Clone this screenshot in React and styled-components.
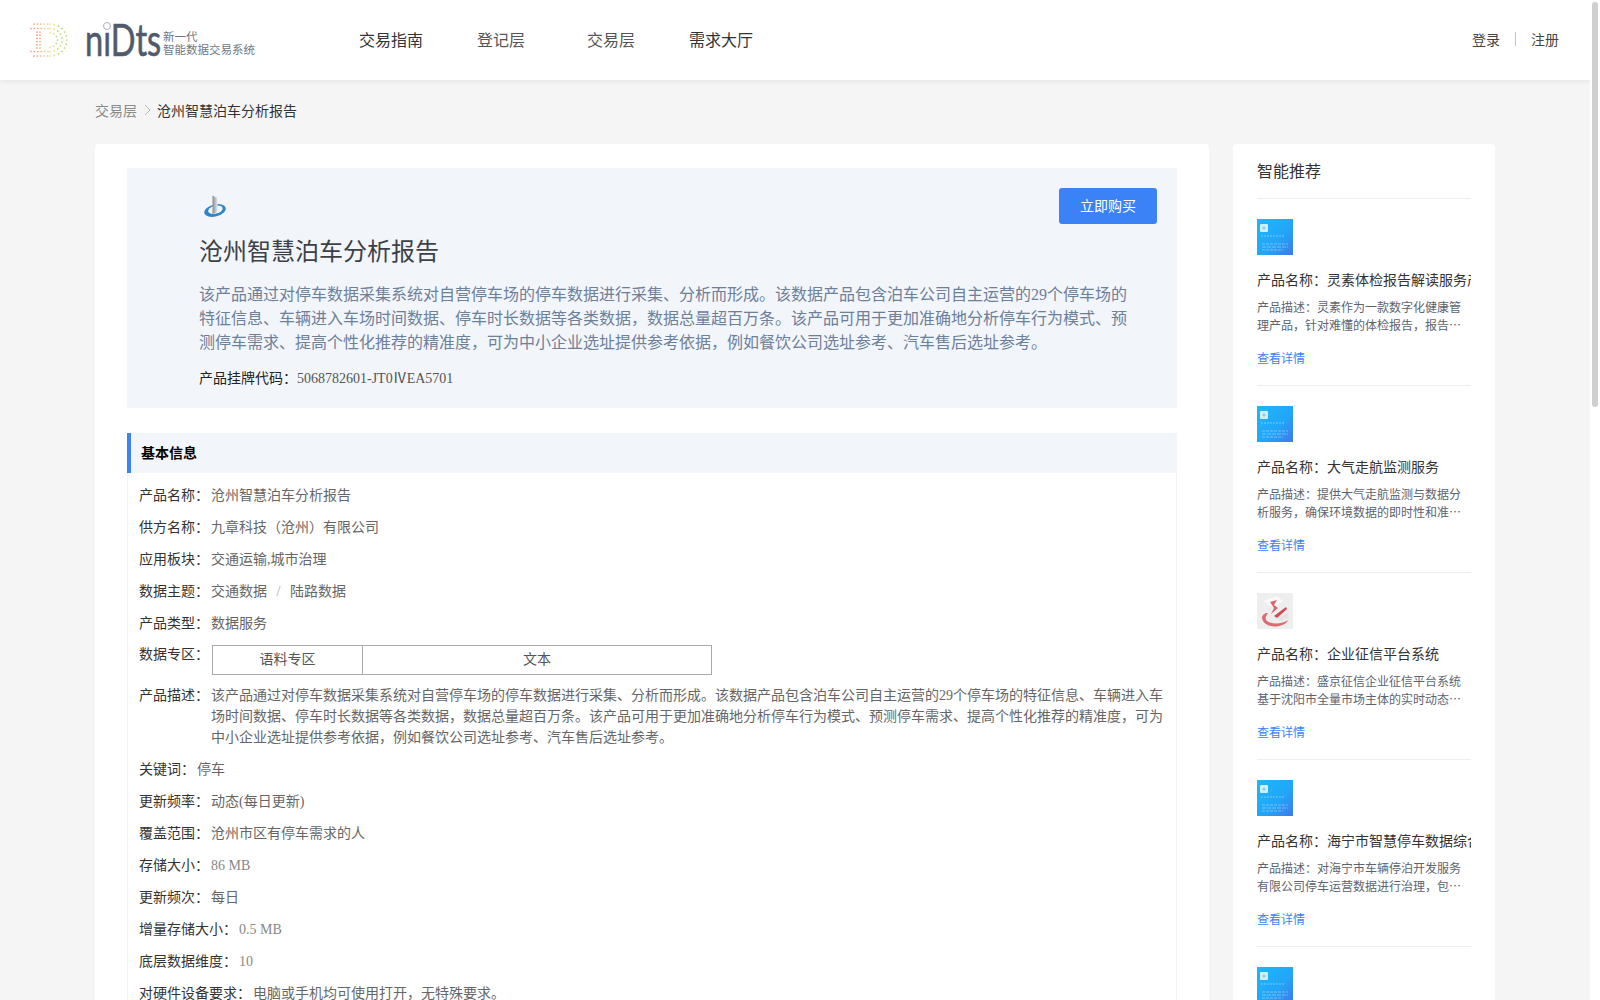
import React from "react";
import styled, { createGlobalStyle } from "styled-components";

const SERIF = `"Liberation Serif", "Noto Sans CJK SC", serif`;
const SANS = `"Noto Sans CJK SC", "Liberation Sans", sans-serif`;

const GlobalStyle = createGlobalStyle`
  html, body {
    margin: 0;
    height: 100%;
    overflow: hidden;
    background: #fff;
  }
  * {
    box-sizing: border-box;
  }
`;

const Shell = styled.div`
  height: 100vh;
  display: flex;
  font-family: ${SANS};
`;

const Scroller = styled.div`
  flex: 1;
  min-width: 0;
  overflow: hidden;
  background: #f5f5f5;
`;

const ScrollRail = styled.div`
  flex: none;
  width: 10px;
  padding: 2px;
  background: #fff;
`;

const ScrollThumb = styled.div`
  height: 405px;
  background: #cfcfcf;
  border-radius: 3px;
`;

const Header = styled.header`
  height: 80px;
  background: #fff;
  box-shadow: 0 1px 6px rgba(0, 0, 0, 0.08);
  display: flex;
  align-items: center;
  padding: 0 31px 2px 30px;
`;

const Brand = styled.div`
  width: 306px;
  display: flex;
  align-items: center;
  margin-top: 2px;
`;

const Wordmark = styled.div`
  position: relative;
  width: 75px;
  height: 40px;
  margin-left: 17px;
  font-family: "Lato", sans-serif;
  font-size: 44px;
  line-height: 38px;
  font-weight: 400;
  color: #4f5b6b;
  -webkit-text-stroke: 0.6px #4f5b6b;
  span {
    display: block;
    transform: scaleX(0.74);
    transform-origin: left center;
    white-space: nowrap;
  }
`;

// the ring that replaces the dot of the i
const WordmarkRing = styled.i`
  position: absolute;
  left: 18px;
  top: 2px;
  width: 8px;
  height: 8px;
  border-radius: 50%;
  background: #fff;
  border: 1.5px solid #a9b0ba;
`;

const BrandText = styled.div`
  margin: 6px 0 0 3px;
  font-size: 11.5px;
  line-height: 13px;
  color: #6f7885;
  white-space: nowrap;
`;

const Nav = styled.nav`
  display: flex;
  flex: 1;
`;

const NavItem = styled.a`
  width: 110px;
  text-align: center;
  font-size: 16px;
  color: ${({ $dim }) => ($dim ? "#555" : "#333")};
`;

const Auth = styled.div`
  display: flex;
  align-items: center;
  font-size: 14px;
  color: #444;
  i {
    width: 1px;
    height: 14px;
    background: #c4c4c4;
    margin: 0 15px;
  }
`;

const Crumbs = styled.div`
  width: 1400px;
  margin: 0 auto;
  padding-top: 19px;
  height: 64px;
  display: flex;
  align-items: flex-start;
  line-height: 22px;
  font-size: 14px;
  color: #8a8a8a;
  svg {
    margin: 5px 4px 0 6px;
  }
  b {
    font-weight: 400;
    color: #333;
  }
`;

const Columns = styled.div`
  width: 1400px;
  margin: 0 auto;
  display: flex;
  gap: 24px;
  align-items: flex-start;
`;

const MainCard = styled.main`
  flex: 1;
  background: #fff;
  border-radius: 4px;
  padding: 24px 32px;
  min-height: 1200px;
`;

const Hero = styled.section`
  position: relative;
  height: 240px;
  background: #f2f5f9;
  padding: 26px 48px 0 72px;
`;

const BuyButton = styled.button`
  position: absolute;
  top: 20px;
  right: 20px;
  width: 98px;
  height: 36px;
  border: 0;
  border-radius: 3px;
  padding: 0 0 3px;
  background: #3b82f6;
  color: #fff;
  font-family: ${SANS};
  font-size: 14px;
`;

const HeroLogo = styled.div`
  height: 24px;
  margin-bottom: 16px;
  padding-left: 2px;
`;

const HeroTitle = styled.h1`
  margin: 0;
  font-family: ${SERIF};
  font-size: 24px;
  line-height: 36px;
  font-weight: 400;
  color: #3c4148;
`;

const HeroDesc = styled.p`
  margin: 13px 0 0;
  font-family: ${SERIF};
  font-size: 16px;
  line-height: 24px;
  color: #6d809b;
`;

const HeroCode = styled.div`
  margin-top: 13px;
  font-family: ${SERIF};
  font-size: 14px;
  line-height: 22px;
  color: #222;
  span {
    color: #555;
  }
`;

const SectionHead = styled.h2`
  margin: 25px 0 0;
  height: 40px;
  line-height: 38px;
  padding-left: 10px;
  border-left: 4px solid #3b82f6;
  background: #f2f5f9;
  font-size: 14px;
  font-weight: 700;
  color: #000;
`;

const InfoBox = styled.div`
  border: 1px solid #f2f2f2;
  border-top: 0;
  padding: 12px 10px 20px 11px;
  min-height: 700px;
  font-family: ${SERIF};
`;

const Row = styled.div`
  display: flex;
  margin-bottom: ${({ $multi }) => ($multi ? "11px" : "10px")};
  font-size: 14px;
  line-height: ${({ $multi }) => ($multi ? "21px" : "22px")};
`;

const Label = styled.span`
  flex: none;
  margin: ${({ $raised }) => ($raised ? "-1px 2px 0 0" : "0 2px 0 0")};
  color: #333;
`;

const Value = styled.span`
  color: ${({ $light }) => ($light ? "#888" : "#666")};
  em {
    font-style: normal;
    color: #aaa;
    margin: 0 6px;
  }
`;

const ZoneTable = styled.div`
  display: flex;
  width: 500px;
  height: 30px;
  margin-left: 1px;
  border: 1px solid #aaa;
  line-height: 28px;
  color: #555;
  text-align: center;
`;

const ZoneCell = styled.div`
  flex: ${({ $grow }) => ($grow ? 1 : "none")};
  width: ${({ $grow }) => ($grow ? "auto" : "150px")};
  border-right: ${({ $grow }) => ($grow ? "0" : "1px solid #aaa")};
`;

const SideCard = styled.aside`
  width: 262px;
  flex: none;
  background: #fff;
  border-radius: 4px;
  padding: 0 24px;
`;

const SideTitle = styled.h3`
  margin: 0;
  height: 55px;
  line-height: 52px;
  font-size: 16px;
  font-weight: 400;
  color: #333;
  border-bottom: 1px solid #eee;
`;

const Rec = styled.article`
  height: 187px;
  padding-top: 20px;
  border-bottom: 1px solid #eee;
`;

const RecName = styled.div`
  margin-top: 14px;
  font-size: 14px;
  line-height: 20px;
  color: #333;
  white-space: nowrap;
  overflow: hidden;
`;

const RecDesc = styled.p`
  margin: 9px 0 0;
  font-size: 12px;
  line-height: 18px;
  height: 36px;
  color: #5c6470;
  display: -webkit-box;
  -webkit-line-clamp: 2;
  -webkit-box-orient: vertical;
  overflow: hidden;
`;

const RecLink = styled.a`
  display: block;
  margin-top: 15px;
  font-size: 12px;
  line-height: 17px;
  color: #3b82f6;
`;

// dotted D mark: rows top and bottom, short stem, nested arcs going from red to green
const dotColor = (x) => {
  if (x < 8) return "#f0806a";
  if (x < 13) return "#f4a060";
  if (x < 19) return "#f6c46a";
  if (x < 25) return "#e4d860";
  return "#a8d450";
};

const buildDots = () => {
  const dots = [];
  const cx = 19;
  const cy = 16;
  [16, 11.5, 7].forEach((r, layer) => {
    const steps = 12 - layer * 3;
    for (let a = -90; a <= 90; a += 180 / steps) {
      const rad = (a * Math.PI) / 180;
      dots.push([cx + 1.05 * r * Math.cos(rad), cy + r * Math.sin(rad)]);
    }
    if (layer < 2) {
      const start = layer === 0 ? 3 : 0;
      for (let x = start; x < cx - 1; x += 3.4) {
        dots.push([x, cy - r]);
        dots.push([x, cy + r]);
      }
    }
  });
  for (let y = 8; y <= 24; y += 3.2) {
    dots.push([6, y]);
    dots.push([9, y]);
  }
  return dots;
};

const DMark = () => (
  <svg width="38" height="34" viewBox="0 0 38 34">
    {buildDots().map(([x, y], i) => (
      <circle key={i} cx={x + 1} cy={y + 1} r="0.85" fill={dotColor(x)} opacity="0.85" />
    ))}
  </svg>
);

const HeroMark = () => (
  <svg width="26" height="24" viewBox="0 0 26 24">
    <defs>
      <linearGradient id="bar" x1="0" x2="1">
        <stop offset="0" stopColor="#858b92" />
        <stop offset="1" stopColor="#e4e6e8" />
      </linearGradient>
    </defs>
    <g transform="rotate(-14 14 16.5)">
      <ellipse cx="14" cy="16.5" rx="11" ry="6" fill="#2c86c9" />
      <ellipse cx="14.6" cy="15.8" rx="7.4" ry="4" fill="#f2f5f9" />
    </g>
    <path d="M11.5 1.5 L16.5 4 V18 L11.5 20 Z" fill="url(#bar)" />
  </svg>
);

const BlueThumb = ({ id }) => (
  <svg width="36" height="36" viewBox="0 0 36 36" style={{ display: "block" }}>
    <defs>
      <linearGradient id={id} x1="0" y1="0" x2="1" y2="1">
        <stop offset="0" stopColor="#1cb8fb" />
        <stop offset="0.6" stopColor="#23a4f8" />
        <stop offset="1" stopColor="#3f78ea" />
      </linearGradient>
    </defs>
    <rect width="36" height="36" fill={`url(#${id})`} />
    <rect x="3" y="5" width="8" height="8" rx="1" fill="#d2efff" />
    <rect x="5.5" y="7.5" width="3" height="3" rx="1.5" fill="#7fcdf8" />
    <path d="M4 17 H28" stroke="#c4ecff" strokeWidth="1" strokeDasharray="2 1" opacity="0.5" />
    <path d="M5 25 H31" stroke="#d2ecff" strokeWidth="1" strokeDasharray="3 1" opacity="0.45" />
    <path d="M5 28 H31" stroke="#d2ecff" strokeWidth="1" strokeDasharray="4 1" opacity="0.45" />
    <path d="M5 31 H26" stroke="#d2ecff" strokeWidth="1" strokeDasharray="3 1" opacity="0.45" />
  </svg>
);

const RedThumb = () => (
  <svg width="36" height="36" viewBox="0 0 36 36" style={{ display: "block" }}>
    <rect width="36" height="36" fill="#eeeeee" />
    <path d="M6 8 L20 3 L26 8 L16 14 Z" fill="#f9f9f9" />
    <path d="M13 9 L20 7 L17 12 L21 15 L14 21 L17 15 Z" fill="#d9666c" />
    <path
      d="M5 24 C5 31 14 35 22 33 C27 32 30 30 31 27 C26 31 15 32 10 28 C8 26 8 24 11 20 C7 20 6 22 5 24 Z"
      fill="#dd6a70"
    />
    <path d="M17 23 L29 14 L30 16 L20 25 Z" fill="#cf4a52" />
    <path d="M20 25 L31 20 L32 24 L24 28 Z" fill="#e3e3e3" />
  </svg>
);

const recs = [
  {
    thumb: "a",
    name: "灵素体检报告解读服务产品",
    desc: "灵素作为一款数字化健康管理产品，针对难懂的体检报告，报告解读服务可以帮助用户快速理解",
  },
  {
    thumb: "b",
    name: "大气走航监测服务",
    desc: "提供大气走航监测与数据分析服务，确保环境数据的即时性和准确性，为治理决策提供支撑",
  },
  {
    thumb: null,
    name: "企业征信平台系统",
    desc: "盛京征信企业征信平台系统基于沈阳市全量市场主体的实时动态数据，提供企业信用服务",
  },
  {
    thumb: "d",
    name: "海宁市智慧停车数据综合治理服务",
    desc: "对海宁市车辆停泊开发服务有限公司停车运营数据进行治理，包括数据采集与清洗等内容",
  },
  {
    thumb: "e",
    name: "智慧交通数据服务",
    desc: "提供城市交通运行数据的采集、治理与分析服务，帮助管理部门提升交通运行效率和水平",
  },
];

const descText =
  "该产品通过对停车数据采集系统对自营停车场的停车数据进行采集、分析而形成。该数据产品包含泊车公司自主运营的29个停车场的特征信息、车辆进入车场时间数据、停车时长数据等各类数据，数据总量超百万条。该产品可用于更加准确地分析停车行为模式、预测停车需求、提高个性化推荐的精准度，可为中小企业选址提供参考依据，例如餐饮公司选址参考、汽车售后选址参考。";

export default function App() {
  return (
    <Shell>
      <GlobalStyle />
      <Scroller>
        <Header>
          <Brand>
            <DMark />
            <Wordmark>
              <span>niDts</span>
              <WordmarkRing />
            </Wordmark>
            <BrandText>
              新一代
              <br />
              智能数据交易系统
            </BrandText>
          </Brand>
          <Nav>
            <NavItem>交易指南</NavItem>
            <NavItem $dim>登记层</NavItem>
            <NavItem $dim>交易层</NavItem>
            <NavItem>需求大厅</NavItem>
          </Nav>
          <Auth>
            <span>登录</span>
            <i />
            <span>注册</span>
          </Auth>
        </Header>

        <Crumbs>
          <span>交易层</span>
          <svg width="10" height="12" viewBox="0 0 10 12">
            <path d="M2 1 L7 6 L2 11" fill="none" stroke="#bbb" strokeWidth="1" />
          </svg>
          <b>沧州智慧泊车分析报告</b>
        </Crumbs>

        <Columns>
          <MainCard>
            <Hero>
              <BuyButton>立即购买</BuyButton>
              <HeroLogo>
                <HeroMark />
              </HeroLogo>
              <HeroTitle>沧州智慧泊车分析报告</HeroTitle>
              <HeroDesc>{descText}</HeroDesc>
              <HeroCode>
                产品挂牌代码：<span>5068782601-JT0ⅣEA5701</span>
              </HeroCode>
            </Hero>

            <SectionHead>基本信息</SectionHead>
            <InfoBox>
              <Row>
                <Label>产品名称：</Label>
                <Value>沧州智慧泊车分析报告</Value>
              </Row>
              <Row>
                <Label>供方名称：</Label>
                <Value>九章科技（沧州）有限公司</Value>
              </Row>
              <Row>
                <Label>应用板块：</Label>
                <Value>交通运输,城市治理</Value>
              </Row>
              <Row>
                <Label>数据主题：</Label>
                <Value>
                  交通数据<em> / </em>陆路数据
                </Value>
              </Row>
              <Row>
                <Label>产品类型：</Label>
                <Value>数据服务</Value>
              </Row>
              <Row>
                <Label $raised>数据专区：</Label>
                <ZoneTable>
                  <ZoneCell>语料专区</ZoneCell>
                  <ZoneCell $grow>文本</ZoneCell>
                </ZoneTable>
              </Row>
              <Row $multi>
                <Label>产品描述：</Label>
                <Value>{descText}</Value>
              </Row>
              <Row>
                <Label>关键词：</Label>
                <Value>停车</Value>
              </Row>
              <Row>
                <Label>更新频率：</Label>
                <Value>动态(每日更新)</Value>
              </Row>
              <Row>
                <Label>覆盖范围：</Label>
                <Value>沧州市区有停车需求的人</Value>
              </Row>
              <Row>
                <Label>存储大小：</Label>
                <Value $light>86 MB</Value>
              </Row>
              <Row>
                <Label>更新频次：</Label>
                <Value>每日</Value>
              </Row>
              <Row>
                <Label>增量存储大小：</Label>
                <Value $light>0.5 MB</Value>
              </Row>
              <Row>
                <Label>底层数据维度：</Label>
                <Value $light>10</Value>
              </Row>
              <Row>
                <Label>对硬件设备要求：</Label>
                <Value>电脑或手机均可使用打开，无特殊要求。</Value>
              </Row>
            </InfoBox>
          </MainCard>

          <SideCard>
            <SideTitle>智能推荐</SideTitle>
            {recs.map((rec) => (
              <Rec key={rec.name}>
                {rec.thumb ? <BlueThumb id={`thumb-${rec.thumb}`} /> : <RedThumb />}
                <RecName>产品名称：{rec.name}</RecName>
                <RecDesc>产品描述：{rec.desc}</RecDesc>
                <RecLink>查看详情</RecLink>
              </Rec>
            ))}
          </SideCard>
        </Columns>
      </Scroller>
      <ScrollRail>
        <ScrollThumb />
      </ScrollRail>
    </Shell>
  );
}
